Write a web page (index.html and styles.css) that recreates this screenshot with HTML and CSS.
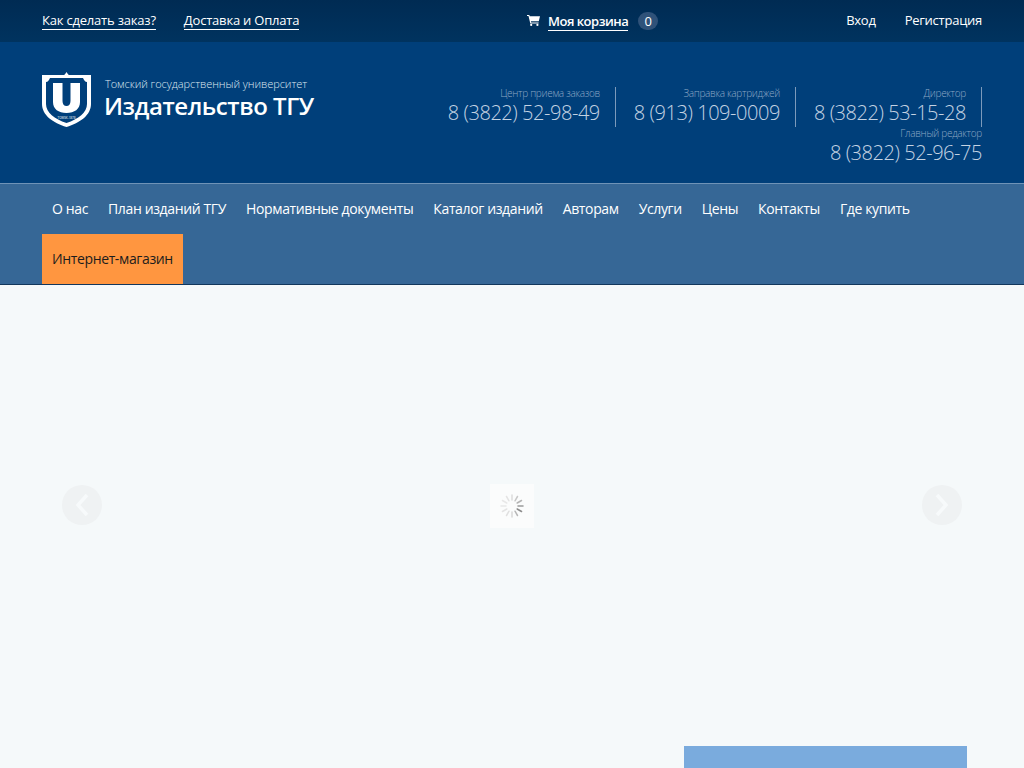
FILE: index.html
```html
<!DOCTYPE html>
<html lang="ru">
<head>
    <meta charset="UTF-8">
    <title>Издательство ТГУ</title>
    <link rel="stylesheet" href="styles.css">
</head>
<body>
    <div class="topbar">
        <div class="container topbar-inner">
            <div class="top-links">
                <a href="#">Как сделать заказ?</a>
                <a href="#">Доставка и Оплата</a>
            </div>
            <div class="cart">
                <svg class="cart-icon" viewBox="0 0 13 11" width="13" height="11">
                    <path fill="#fff" d="M0 0h2.300l.4 1.300H13l-1.200 5H3.900l.3 1.100h7.400v1.100H3.300L1.500 1.100H0z"/>
                    <circle fill="#fff" cx="4.200" cy="9.900" r="1.100"/>
                    <circle fill="#fff" cx="10.400" cy="9.900" r="1.100"/>
                </svg>
                <a href="#" class="cart-link">Моя корзина</a>
                <span class="cart-count">0</span>
            </div>
            <div class="user-links">
                <a href="#">Вход</a>
                <a href="#">Регистрация</a>
            </div>
        </div>
    </div>

    <header class="header">
        <div class="container header-inner">
            <a href="#" class="logo">
                <svg class="logo-mark" viewBox="0 0 49 55" width="49" height="55">
                    <path fill="#fff" d="M0 3h21c1 0 2-.5 2.500-1.500l1-1.500 1 1.500c.5 1 1.500 1.500 2.500 1.500h21v29c0 11-11 19-24.500 23C11 51 0 43 0 32z"/>
                    <path fill="#003f7a" d="M4 10c2 0 3-2 4-4h33c1 2 2 4 4 4v22c0 8.500-8.500 15-20.500 19C12.500 47 4 40.500 4 32z"/>
                    <path fill="#fff" d="M11 11h9.500v18c0 3 1.500 5 4 5s4-2 4-5V11H38v19c0 7-5.500 11-13.500 11S11 37 11 30z"/>
                    <text class="logo-since" x="24.500" y="47" text-anchor="middle">TOMSK-1878</text>
                </svg>
                <span class="logo-text">
                    <span class="logo-sub">Томский государственный университет</span>
                    <span class="logo-title">Издательство ТГУ</span>
                </span>
            </a>
            <div class="phones">
                <div class="phone phone-line">
                    <span class="phone-label">Центр приема заказов</span>
                    <span class="phone-num">8 (3822) 52-98-49</span>
                </div>
                <div class="phone phone-line">
                    <span class="phone-label">Заправка картриджей</span>
                    <span class="phone-num">8 (913) 109-0009</span>
                </div>
                <div class="phone phone-line">
                    <span class="phone-label">Директор</span>
                    <span class="phone-num">8 (3822) 53-15-28</span>
                </div>
                <div class="phone phone-last">
                    <span class="phone-label">Главный редактор</span>
                    <span class="phone-num">8 (3822) 52-96-75</span>
                </div>
            </div>
        </div>
    </header>

    <nav class="nav">
        <div class="container nav-inner">
            <a href="#">О нас</a>
            <a href="#">План изданий ТГУ</a>
            <a href="#">Нормативные документы</a>
            <a href="#">Каталог изданий</a>
            <a href="#">Авторам</a>
            <a href="#">Услуги</a>
            <a href="#">Цены</a>
            <a href="#">Контакты</a>
            <a href="#">Где купить</a>
            <a href="#" class="shop">Интернет-магазин</a>
        </div>
    </nav>

    <main class="main">
        <section class="slider">
            <a href="#" class="arrow">
                <svg viewBox="0 0 16 24" width="16" height="24"><path d="M13 2L4 12l9 10" fill="none" stroke="#f7fafb" stroke-width="3.500"/></svg>
            </a>
            <div class="loader">
                <svg viewBox="0 0 24 24" width="24" height="24">
                    <g stroke-width="1.500" stroke-linecap="round">
                        <path stroke="#dcdcdc" d="M12 1v5"/>
                        <path stroke="#c8c8c8" d="M17.500 2.500L15 6.800"/>
                        <path stroke="#b4b4b4" d="M21.500 6.500L17.200 9"/>
                        <path stroke="#9a9a9a" d="M23 12h-5"/>
                        <path stroke="#8c8c8c" d="M21.500 17.500L17.200 15"/>
                        <path stroke="#b8b8b8" d="M17.500 21.500L15 17.200"/>
                        <path stroke="#d8d8d8" d="M12 23v-5"/>
                        <path stroke="#e0e0e0" d="M6.500 21.500L9 17.200"/>
                        <path stroke="#e4e4e4" d="M2.500 17.500L6.800 15"/>
                        <path stroke="#e8e8e8" d="M1 12h5"/>
                        <path stroke="#e8e8e8" d="M2.500 6.500L6.800 9"/>
                        <path stroke="#e4e4e4" d="M6.500 2.500L9 6.800"/>
                    </g>
                </svg>
            </div>
            <a href="#" class="arrow">
                <svg viewBox="0 0 16 24" width="16" height="24"><path d="M3 2l9 10-9 10" fill="none" stroke="#f7fafb" stroke-width="3.500"/></svg>
            </a>
        </section>
        <div class="promo-row">
            <div class="promo"></div>
        </div>
    </main>
</body>
</html>
```

FILE: styles.css
```css
html, body {
    height: 768px;
    overflow: hidden;
}
body {
    margin: 0;
    font-family: "Open Sans", sans-serif;
    font-size: 14px;
    background-color: #f5f9fa;
    color: #333;
}
a {
    color: #fff;
    text-decoration: none;
}
.container {
    width: 940px;
    margin: 0 auto;
}

/* top bar */
.topbar {
    height: 42px;
    background: linear-gradient(to bottom, #002b53, #00335f);
    font-size: 13px;
    letter-spacing: -0.2px;
}
.topbar-inner {
    display: flex;
    align-items: center;
    height: 41px;
}
.top-links {
    display: flex;
    gap: 28px;
    width: 485px;
}
.top-links a {
    line-height: 18px;
    border-bottom: 1px solid #fff;
}
.cart {
    display: flex;
    align-items: center;
}
.cart-icon {
    margin-right: 8px;
}
.cart-link {
    font-weight: 600;
    letter-spacing: -0.5px;
    line-height: 18px;
    border-bottom: 1px solid #fff;
    margin-top: 2px;
}
.cart-count {
    width: 20px;
    height: 18px;
    margin-left: 10px;
    border-radius: 9px;
    background-color: #2f5279;
    color: #fff;
    line-height: 18px;
    text-align: center;
}
.user-links {
    display: flex;
    gap: 29px;
    margin-left: auto;
    padding-bottom: 2px;
    letter-spacing: -0.25px;
}

/* header */
.header {
    height: 141px;
    background-color: #003f7a;
}
.header-inner {
    display: flex;
    justify-content: space-between;
}
.logo {
    display: flex;
    padding-top: 30px;
}
.logo-mark {
    margin-right: 13px;
}
.logo-since {
    font-family: "Open Sans", sans-serif;
    font-size: 3px;
    fill: #fff;
}
.logo-text {
    display: flex;
    flex-direction: column;
    white-space: nowrap;
}
.logo-sub {
    margin: 4px 0 0 1px;
    font-size: 11px;
    font-weight: 300;
    letter-spacing: -0.05px;
    line-height: 15px;
    color: #dfe8f1;
}
.logo-title {
    font-size: 24px;
    font-weight: 600;
    letter-spacing: -0.45px;
    line-height: 30px;
}
.phones {
    display: flex;
    flex-wrap: wrap;
    justify-content: flex-end;
    width: 600px;
    padding-top: 45px;
}
.phone {
    display: flex;
    flex-direction: column;
    align-items: flex-end;
    color: #c4d3e3;
}
.phone-line {
    height: 40px;
    padding-right: 15px;
    margin-left: 18px;
    border-right: 1px solid #7c9abb;
}
.phone-last {
    width: 100%;
}
.phone-label {
    font-size: 10px;
    font-weight: 300;
    letter-spacing: -0.3px;
    line-height: 12px;
    color: #8ea8c5;
}
.phone-num {
    font-size: 20px;
    font-weight: 300;
    letter-spacing: -0.45px;
    line-height: 27px;
    white-space: nowrap;
}

/* menu */
.nav {
    box-sizing: border-box;
    height: 102px;
    border-top: 1px solid #6f93b7;
    border-bottom: 1px solid #12375c;
    background-color: #366796;
}
.nav-inner {
    display: flex;
    flex-wrap: wrap;
}
.nav-inner a {
    height: 50px;
    padding: 0 10px;
    line-height: 50px;
    letter-spacing: -0.37px;
    white-space: nowrap;
}
.nav-inner .shop {
    background-color: #ff9640;
    color: #1d1d1d;
}

/* slider */
.main {
    height: 483px;
    overflow: hidden;
}
.slider {
    display: flex;
    align-items: center;
    justify-content: space-between;
    box-sizing: border-box;
    height: 440px;
    padding: 0 62px;
}
.arrow {
    display: flex;
    align-items: center;
    justify-content: center;
    width: 40px;
    height: 40px;
    border-radius: 50%;
    background-color: #eff2f3;
}
.loader {
    display: flex;
    align-items: center;
    justify-content: center;
    width: 44px;
    height: 44px;
    margin-top: 2px;
    background-color: #fbfcfc;
}
.promo-row {
    display: flex;
    margin-top: 21px;
    padding-left: 684px;
}
.promo {
    width: 283px;
    height: 22px;
    background-color: #7aabdd;
}
```
